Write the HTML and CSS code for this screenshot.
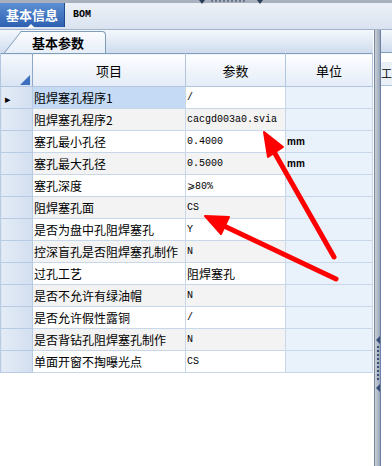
FILE: index.html
```html
<!DOCTYPE html>
<html>
<head>
    <title>基本参数</title>
    <link rel="stylesheet" href="styles.css">
</head>
<body>
    <div class="topbar">
        <svg width="70" height="4" viewBox="0 0 70 4">
            <polygon points="2,0 8,0 5,4" fill="#2d3e5c"/>
            <line x1="14" y1="1" x2="50" y2="1" stroke="#2d3e5c" stroke-dasharray="2,2"/>
            <polygon points="60,0 66,0 63,4" fill="#2d3e5c"/>
        </svg>
    </div>
    <div class="tabs1">
        <div class="tab-main">基本信息</div>
        <div class="tab-bom">BOM</div>
    </div>

    <div class="main">
        <div class="left">
            <div class="tabs2">
                <div class="tab-sub">基本参数</div>
            </div>
            <table class="grid">
                <colgroup>
                    <col class="c0"><col class="c1"><col class="c2"><col class="c3">
                </colgroup>
                <thead>
                    <tr>
                        <th class="corner"><span class="corner-tri"></span></th>
                        <th>项目</th>
                        <th>参数</th>
                        <th>单位</th>
                    </tr>
                </thead>
                <tbody>
                    <tr>
                        <td class="rh"><span class="cur">&#9656;</span></td>
                        <td class="name sel">阻焊塞孔程序1</td>
                        <td class="val mono">/</td>
                        <td class="unit"></td>
                    </tr>
                    <tr class="alt">
                        <td class="rh"></td>
                        <td class="name">阻焊塞孔程序2</td>
                        <td class="val mono">cacgd003a0.svia</td>
                        <td class="unit"></td>
                    </tr>
                    <tr>
                        <td class="rh"></td>
                        <td class="name">塞孔最小孔径</td>
                        <td class="val mono">0.4000</td>
                        <td class="unit mono">mm</td>
                    </tr>
                    <tr class="alt">
                        <td class="rh"></td>
                        <td class="name">塞孔最大孔径</td>
                        <td class="val mono">0.5000</td>
                        <td class="unit mono">mm</td>
                    </tr>
                    <tr>
                        <td class="rh"></td>
                        <td class="name">塞孔深度</td>
                        <td class="val mono">⩾80%</td>
                        <td class="unit"></td>
                    </tr>
                    <tr class="alt">
                        <td class="rh"></td>
                        <td class="name">阻焊塞孔面</td>
                        <td class="val mono">CS</td>
                        <td class="unit"></td>
                    </tr>
                    <tr>
                        <td class="rh"></td>
                        <td class="name">是否为盘中孔阻焊塞孔</td>
                        <td class="val mono">Y</td>
                        <td class="unit"></td>
                    </tr>
                    <tr class="alt">
                        <td class="rh"></td>
                        <td class="name">控深盲孔是否阻焊塞孔制作</td>
                        <td class="val mono">N</td>
                        <td class="unit"></td>
                    </tr>
                    <tr>
                        <td class="rh"></td>
                        <td class="name">过孔工艺</td>
                        <td class="val">阻焊塞孔</td>
                        <td class="unit"></td>
                    </tr>
                    <tr class="alt">
                        <td class="rh"></td>
                        <td class="name">是否不允许有绿油帽</td>
                        <td class="val mono">N</td>
                        <td class="unit"></td>
                    </tr>
                    <tr>
                        <td class="rh"></td>
                        <td class="name">是否允许假性露铜</td>
                        <td class="val mono">/</td>
                        <td class="unit"></td>
                    </tr>
                    <tr class="alt">
                        <td class="rh"></td>
                        <td class="name">是否背钻孔阻焊塞孔制作</td>
                        <td class="val mono">N</td>
                        <td class="unit"></td>
                    </tr>
                    <tr>
                        <td class="rh"></td>
                        <td class="name">单面开窗不掏曝光点</td>
                        <td class="val mono">CS</td>
                        <td class="unit"></td>
                    </tr>
                </tbody>
            </table>
        </div>

        <div class="splitter">
            <span class="grip-tri"></span>
            <span class="grip-dots"></span>
            <span class="grip-tri"></span>
        </div>

        <div class="right">
            <div class="right-top"></div>
            <div class="right-box">
                <div class="right-head">工</div>
            </div>
        </div>
    </div>

    <!-- red annotation arrows drawn over the grid -->
    <svg class="marks" width="392" height="466" viewBox="0 0 392 466">
        <g stroke="#f00" stroke-width="5" stroke-linecap="round" fill="#f00">
            <line x1="334" y1="257" x2="273" y2="150"/>
            <polygon points="264,132 283,147 268,157" stroke-width="2" stroke-linejoin="round"/>
            <line x1="336" y1="279" x2="222" y2="225"/>
            <polygon points="205,216 229,217 221,234" stroke-width="2" stroke-linejoin="round"/>
        </g>
    </svg>
</body>
</html>
```

FILE: styles.css
```css
body {
    margin: 0;
    width: 392px;
    height: 466px;
    overflow: hidden;
    background: #fff;
    font-family: "Noto Sans CJK SC", "Liberation Sans", sans-serif;
    font-size: 12px;
    color: #000;
    position: relative;
}

.topbar {
    height: 3px;
    background: #a9b1be;
    padding-left: 197px;
    display: flex;
    align-items: flex-start;
}

.topbar svg {
    display: block;
}

.tabs1 {
    height: 26px;
    display: flex;
    align-items: stretch;
    background: linear-gradient(#edf1f7, #d9e3f0);
    border-bottom: 1px solid #a3b3c9;
}

.tab-main {
    position: relative;
    width: 64px;
    height: 24px;
    line-height: 24px;
    text-align: center;
    color: #fff;
    font-weight: bold;
    font-size: 13px;
    background: linear-gradient(#5d8fd4, #2d60b0);
    border-right: 1px solid #1f4a8c;
}

.tab-main::after {
    content: "";
    position: absolute;
    left: 27px;
    bottom: -1px;
    border-left: 4px solid transparent;
    border-right: 4px solid transparent;
    border-bottom: 4px solid #fff;
}

.tab-bom {
    padding-left: 8px;
    line-height: 24px;
    font-family: "Liberation Mono", monospace;
    font-size: 10px;
    font-weight: bold;
}

.main {
    display: flex;
    height: 436px;
}

.left {
    width: 373px;
    display: flex;
    flex-direction: column;
}

.tabs2 {
    height: 23px;
    background: linear-gradient(#f4f8fd, #cfdcee);
    padding-left: 22px;
    display: flex;
    align-items: flex-end;
}

.tab-sub {
    position: relative;
    z-index: 0;
    width: 73px;
    height: 21px;
    line-height: 21px;
    padding-left: 10px;
    font-weight: bold;
    font-size: 13px;
    background: linear-gradient(#fbfcfe, #e6eef9);
    border: 1px solid #7f9db9;
    border-left: none;
    border-bottom: none;
    border-radius: 0 4px 0 0;
}

.tab-sub::before {
    content: "";
    position: absolute;
    left: -1px;
    top: -1px;
    bottom: 0;
    width: 16px;
    background: linear-gradient(#fbfcfe, #e6eef9);
    border-left: 1px solid #7f9db9;
    border-top: 1px solid #7f9db9;
    transform: skewX(-38deg);
    transform-origin: top left;
    z-index: -1;
}

.grid {
    border-collapse: collapse;
    table-layout: fixed;
    width: 373px;
    border-top: 1px solid #7f9db9;
    border-right: 1px solid #6a82a8;
}

.c0 { width: 32px; }
.c1 { width: 153px; }
.c2 { width: 100px; }
.c3 { width: 87px; }

.grid th {
    height: 32px;
    padding: 0;
    font-weight: normal;
    font-size: 13px;
    background: linear-gradient(#fdfeff, #e4ecf7);
    border: 1px solid #b3c6e0;
    border-top: none;
}

.grid th.corner {
    position: relative;
    background: linear-gradient(#f4f8fd, #d9e4f3);
    border-right: 1px solid #8ea8cc;
}

.corner-tri {
    position: absolute;
    right: 2px;
    bottom: 1px;
    border-left: 10px solid transparent;
    border-bottom: 10px solid #3d6fbf;
}

.grid td {
    height: 21px;
    padding: 0 0 0 1px;
    border: 1px solid #c9d7ea;
    white-space: nowrap;
    overflow: hidden;
    background: #fff;
}

.grid tr.alt td {
    background: #f3f3f3;
}

.grid td.rh,
.grid tr.alt td.rh {
    background: linear-gradient(90deg, #e3ebf6, #d3dff0);
    border-right: 1px solid #8ea8cc;
    border-color: #b9cbe3;
    padding-left: 4px;
}

.cur {
    font-size: 11px;
}

.grid td.sel {
    background: #c5dbf5;
}

.grid td.unit,
.grid tr.alt td.unit {
    background: #e9f1fb;
}

.mono {
    font-family: "Liberation Mono", monospace;
    font-size: 10px;
}

.unit.mono {
    font-family: "Liberation Sans", sans-serif;
    font-size: 10px;
    font-weight: bold;
}

.splitter {
    width: 6px;
    margin-left: 1px;
    background: linear-gradient(90deg, #c9d0da, #9aa5b5);
    border-left: 1px solid #7a879b;
    display: flex;
    flex-direction: column;
    align-items: center;
    padding-top: 306px;
    gap: 2px;
}

.grip-tri {
    width: 0;
    height: 0;
    border-top: 4px solid transparent;
    border-bottom: 4px solid transparent;
    border-right: 4px solid #3a4e75;
}

.grip-dots {
    width: 2px;
    height: 36px;
    background: repeating-linear-gradient(#3a4e75 0 2px, transparent 2px 4px);
}

.right {
    flex: 1;
    display: flex;
    flex-direction: column;
    border-left: 1px solid #6a82a8;
}

.right-top {
    height: 22px;
    background: linear-gradient(#f4f8fd, #cfdcee);
}

.right-box {
    flex: 1;
    background: #fff;
    border-top: 1px solid #7f9db9;
    padding-top: 9px;
}

.right-head {
    height: 23px;
    line-height: 23px;
    font-size: 11px;
    background: #eaf0f8;
    border-bottom: 1px solid #b3c6e0;
}

.marks {
    position: absolute;
    left: 0;
    top: 0;
    pointer-events: none;
}
```
